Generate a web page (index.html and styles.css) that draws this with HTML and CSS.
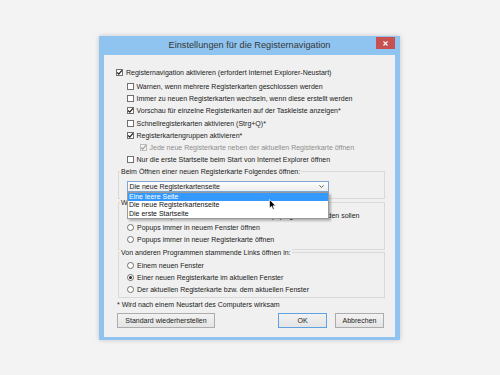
FILE: index.html
```html
<!DOCTYPE html>
<html lang="de">
<head>
<meta charset="utf-8">
<title>Einstellungen für die Registernavigation</title>
<link rel="stylesheet" href="styles.css">
</head>
<body>
<div class="window">
  <div class="titlebar">
    <span class="tb-spacer"></span>
    <span class="title">Einstellungen für die Registernavigation</span>
    <span class="close"><svg width="5" height="5" viewBox="0 0 5 5"><path d="M0.5 0.5L4.5 4.5M4.5 0.5L0.5 4.5" stroke="#fff" stroke-width="1.1" fill="none"/></svg></span>
  </div>
  <div class="content">
    <div class="row main">
      <span class="cb"><svg width="7" height="7" viewBox="0 0 7 7"><path d="M1.2 3.5L2.8 5.2L5.9 1.4" stroke="#1e1e1e" stroke-width="1.2" fill="none"/></svg></span>
      <span>Registernavigation aktivieren (erfordert Internet Explorer-Neustart)</span>
    </div>
    <div class="sublist">
      <div class="row sub"><span class="cb"></span><span>Warnen, wenn mehrere Registerkarten geschlossen werden</span></div>
      <div class="row sub"><span class="cb"></span><span>Immer zu neuen Registerkarten wechseln, wenn diese erstellt werden</span></div>
      <div class="row sub"><span class="cb"><svg width="7" height="7" viewBox="0 0 7 7"><path d="M1.2 3.5L2.8 5.2L5.9 1.4" stroke="#1e1e1e" stroke-width="1.2" fill="none"/></svg></span><span>Vorschau für einzelne Registerkarten auf der Taskleiste anzeigen*</span></div>
      <div class="row sub"><span class="cb"></span><span>Schnellregisterkarten aktivieren (Strg+Q)*</span></div>
      <div class="row sub"><span class="cb"><svg width="7" height="7" viewBox="0 0 7 7"><path d="M1.2 3.5L2.8 5.2L5.9 1.4" stroke="#1e1e1e" stroke-width="1.2" fill="none"/></svg></span><span>Registerkartengruppen aktivieren*</span></div>
      <div class="row sub2 disabled"><span class="cb"><svg width="7" height="7" viewBox="0 0 7 7"><path d="M1.2 3.5L2.8 5.2L5.9 1.4" stroke="#a0a0a0" stroke-width="1.2" fill="none"/></svg></span><span>Jede neue Registerkarte neben der aktuellen Registerkarte öffnen</span></div>
      <div class="row sub"><span class="cb"></span><span>Nur die erste Startseite beim Start von Internet Explorer öffnen</span></div>
    </div>

    <div class="group g1">
      <div class="glabel">Beim Öffnen einer neuen Registerkarte Folgendes öffnen:</div>
      <div class="combo">
        <div class="combo-box">
          <span>Die neue Registerkartenseite</span>
          <svg width="5" height="3" viewBox="0 0 5 3"><path d="M0.4 0.4L2.5 2.5L4.6 0.4" stroke="#555" stroke-width="0.9" fill="none"/></svg>
        </div>
        <ul class="combo-list">
          <li class="selected">Eine leere Seite</li>
          <li>Die neue Registerkartenseite</li>
          <li>Die erste Startseite</li>
        </ul>
      </div>
    </div>

    <div class="group g2">
      <div class="glabel">Wenn ein Popup gefunden wird:</div>
      <div class="radios">
        <div class="row radio-row"><span class="rb"></span><span>Internet Explorer bestimmen lassen, wie Popups geöffnet werden sollen</span></div>
        <div class="row radio-row"><span class="rb"></span><span>Popups immer in neuem Fenster öffnen</span></div>
        <div class="row radio-row"><span class="rb"></span><span>Popups immer in neuer Registerkarte öffnen</span></div>
      </div>
    </div>

    <div class="group g3">
      <div class="glabel">Von anderen Programmen stammende Links öffnen in:</div>
      <div class="radios">
        <div class="row radio-row"><span class="rb"></span><span>Einem neuen Fenster</span></div>
        <div class="row radio-row"><span class="rb on"></span><span>Einer neuen Registerkarte im aktuellen Fenster</span></div>
        <div class="row radio-row"><span class="rb"></span><span>Der aktuellen Registerkarte bzw. dem aktuellen Fenster</span></div>
      </div>
    </div>

    <div class="note">* Wird nach einem Neustart des Computers wirksam</div>

    <div class="buttons">
      <button class="btn wide">Standard wiederherstellen</button>
      <span class="btn-spacer"></span>
      <button class="btn default">OK</button>
      <button class="btn">Abbrechen</button>
    </div>
  </div>
</div>
<svg class="cursor" width="7" height="11" viewBox="0 0 8 12.5"><path d="M0.5 0.5L0.5 10.5L2.9 8.3L4.5 11.9L6 11.2L4.5 7.8L7.6 7.8Z" fill="#000" stroke="#fff" stroke-width="0.8"/></svg>
</body>
</html>
```

FILE: styles.css
```css
html, body {
  margin: 0;
  padding: 0;
}
body {
  background: #f3f3f3;
  font-family: "Liberation Sans", Arial, sans-serif;
  font-size: 7px;
  line-height: 9px;
  color: #222;
  width: 500px;
  height: 375px;
  overflow: hidden;
  position: relative;
}
.window {
  width: 301px;
  box-sizing: border-box;
  margin: 36px 0 0 99px;
  background: #8fc4f0;
  padding: 0 5px 3px 5px;
  box-shadow: 0 0 5px rgba(0, 0, 0, 0.18);
}
.titlebar {
  height: 19px;
  display: grid;
  grid-template-columns: 19px 1fr 19px;
  align-items: center;
}
.title {
  text-align: center;
  font-size: 9.2px;
  color: #363636;
  white-space: nowrap;
}
.close {
  align-self: start;
  margin-top: 1px;
  height: 12px;
  background: #c75050;
  display: flex;
  align-items: center;
  justify-content: center;
}
.close svg { display: block; }
.content {
  background: #f0f0f0;
  padding: 11px 10px 9px 12px;
}
.row {
  display: flex;
  align-items: center;
  gap: 2.5px;
  white-space: nowrap;
}
.main { height: 12px; gap: 3px; }
.sublist { margin-top: 2px; }
.sub { height: 12.3px; padding-left: 11px; }
.sub2 { height: 12.3px; padding-left: 24px; }
.disabled { color: #8e8e8e; }
.cb {
  width: 7px;
  height: 7px;
  box-sizing: border-box;
  border: 1px solid #707070;
  background: #fff;
  position: relative;
  flex: none;
}
.cb svg {
  position: absolute;
  left: -1px;
  top: -1px;
}
.disabled .cb { border-color: #bdbdbd; background: #f4f4f4; }
.group {
  border: 1px solid #d9d9d9;
  margin-left: 2px;
  padding: 0 0 0 2px;
}
.glabel {
  margin-top: -5px;
  margin-left: -1px;
  padding: 0 1px;
  width: fit-content;
  background: #f0f0f0;
  white-space: nowrap;
}
.g1 { margin-top: 5px; padding-bottom: 6px; }
.g2 { margin-top: 3px; padding-bottom: 4px; }
.g3 { margin-top: 2px; padding-bottom: 2px; }
.combo {
  position: relative;
  margin: 5px 0 0 6px;
  width: 202px;
  height: 11px;
}
.combo-box {
  box-sizing: border-box;
  height: 11px;
  border: 1px solid #7fa5cf;
  background: linear-gradient(#fdfdfd, #eeeeee);
  display: flex;
  align-items: center;
  justify-content: space-between;
  padding: 0 4px 0 1.5px;
}
.combo-box svg { display: block; }
.combo-list {
  position: absolute;
  z-index: 2;
  top: 100%;
  left: 0;
  width: 100%;
  box-sizing: border-box;
  margin: 0;
  padding: 0;
  list-style: none;
  background: #fff;
  border: 1px solid #9a9a9a;
  box-shadow: 2px 2px 2px rgba(0, 0, 0, 0.25);
}
.combo-list li {
  height: 8.3px;
  line-height: 8.3px;
  padding-left: 1px;
  color: #111;
}
.combo-list li.selected {
  background: #3399ff;
  color: #fff;
}
.radios { margin-top: 2px; }
.radio-row { height: 12px; padding-left: 6px; gap: 3px; }
.rb {
  width: 7px;
  height: 7px;
  box-sizing: border-box;
  border: 1px solid #707070;
  border-radius: 50%;
  background: #fff;
  flex: none;
  display: flex;
  align-items: center;
  justify-content: center;
}
.rb.on::after {
  content: "";
  width: 3px;
  height: 3px;
  border-radius: 50%;
  background: #2a2a2a;
}
.note {
  margin: 2px 0 0 1px;
  white-space: nowrap;
}
.buttons {
  margin: 4px 1px 0 1px;
  display: flex;
  align-items: center;
  gap: 8px;
}
.btn-spacer { flex: 1; }
.btn {
  height: 15px;
  width: 49px;
  box-sizing: border-box;
  border: 1px solid #acacac;
  background: linear-gradient(#f2f2f2, #e4e4e4);
  font-family: "Liberation Sans", Arial, sans-serif;
  font-size: 7px;
  color: #222;
  padding: 0;
  margin: 0;
}
.btn.wide { width: 98px; }
.btn.default { border-color: #5ea3df; }
.cursor {
  position: absolute;
  left: 269px;
  top: 199px;
  z-index: 5;
}
```
